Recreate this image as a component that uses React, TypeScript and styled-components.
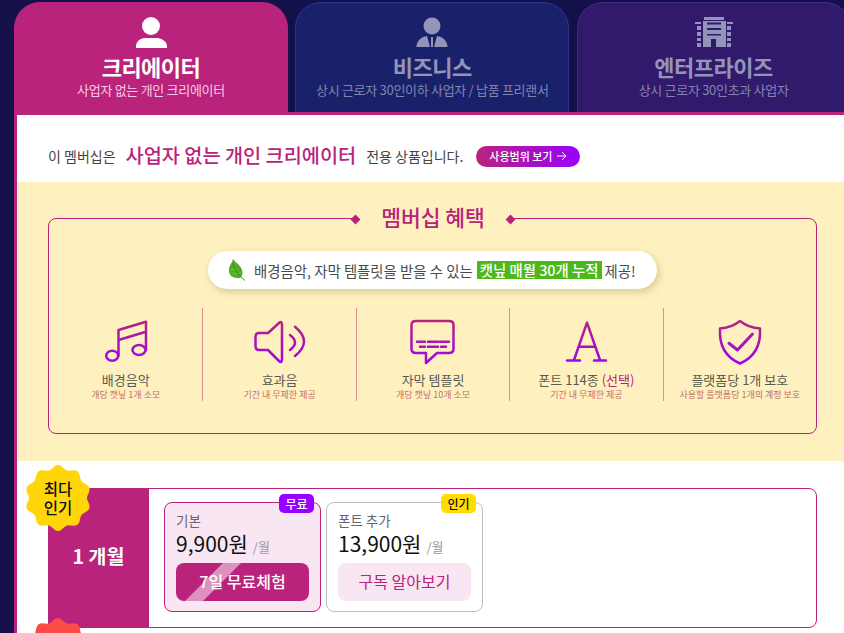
import React from 'react';
import styled, { createGlobalStyle } from 'styled-components';

const GlobalStyle = createGlobalStyle`
  html, body {
    margin: 0;
    padding: 0;
    height: 633px;
    overflow: hidden;
    background: #14104a;
    font-family: "Noto Sans CJK KR", "Noto Sans", sans-serif;
  }
  * {
    box-sizing: border-box;
  }
`;

const PINK = '#b9237c';

const Page = styled.div`
  width: 851px;
  height: 633px;
  padding: 2px 0 0 14px;
  overflow: hidden;
`;

const Tabs = styled.div`
  display: flex;
  gap: 7.3px;
  height: 110px;
`;

const Tab = styled.div<{ $bg: string; $line: string; $active?: boolean }>`
  width: 274px;
  border-radius: 26px 26px 0 0;
  background: ${(p) => p.$bg};
  border: 1px solid ${(p) => p.$line};
  border-bottom: 0;
  padding-top: 13px;
  display: flex;
  flex-direction: column;
  align-items: center;
  color: ${(p) => (p.$active ? '#fff' : '#9394b8')};
`;

const TabIcon = styled.svg`
  width: 38px;
  height: 34px;
  fill: currentColor;
  display: block;
`;

const TabTitle = styled.div`
  font-size: 22px;
  line-height: 28px;
  font-weight: 700;
  letter-spacing: -0.5px;
  margin-top: 2px;
`;

const TabSub = styled.div<{ $active?: boolean }>`
  font-size: 13px;
  line-height: 20px;
  letter-spacing: -0.3px;
  color: ${(p) => (p.$active ? '#f4cfe5' : '#8385ae')};
`;

const Panel = styled.div`
  width: 837px;
  height: 521px;
  background: #fff;
  border: 3px solid ${PINK};
  border-bottom: 0;
  position: relative;
`;

const Intro = styled.div`
  height: 67px;
  padding: 15px 0 0 31px;
  display: flex;
  align-items: center;
  color: #444;
  font-size: 14px;
`;

const IntroStrong = styled.strong`
  font-size: 19.7px;
  font-weight: 500;
  color: ${PINK};
  margin: 0 10px;
  line-height: 24px;
  position: relative;
  top: -1px;
`;

const ScopeButton = styled.a`
  margin-left: 13px;
  width: 104px;
  height: 21px;
  border-radius: 11px;
  background: linear-gradient(90deg, ${PINK}, #9900ff);
  color: #fff;
  font-size: 11px;
  font-weight: 500;
  display: flex;
  align-items: center;
  justify-content: center;
  gap: 4px;
`;

const Benefits = styled.section`
  height: 279px;
  background: #fef1bf;
  padding: 36px 31px 0;
`;

const BenefitBox = styled.div`
  position: relative;
  height: 216px;
  border: 1px solid ${PINK};
  border-radius: 8px;
  padding-top: 32px;
`;

const BenefitHeading = styled.div`
  position: absolute;
  top: -17px;
  left: 303px;
  width: 162px;
  height: 32px;
  background: #fef1bf;
  display: flex;
  align-items: center;
  justify-content: space-between;
`;

const Diamond = styled.i`
  width: 7px;
  height: 7px;
  background: ${PINK};
  transform: rotate(45deg);
  margin-top: 2px;
`;

const HeadingText = styled.h2`
  margin: 0 0 3px;
  font-size: 21.5px;
  font-weight: 500;
  color: ${PINK};
  line-height: 28px;
`;

const NoticeWrap = styled.div`
  display: flex;
  justify-content: center;
`;

const Notice = styled.div`
  width: 449px;
  height: 38px;
  border-radius: 19px;
  background: #fff;
  box-shadow: 2px 3px 7px rgba(120, 100, 40, 0.28);
  display: flex;
  align-items: center;
  padding-left: 20px;
  font-size: 14.4px;
  color: #4a4a4a;
  white-space: nowrap;
`;

const Leaf = styled.svg`
  width: 20px;
  height: 26px;
  margin-right: 6px;
  flex: none;
`;

const Highlight = styled.span`
  background: #4cb81c;
  color: #fff;
  font-weight: 500;
  padding: 0 3px;
  margin: 0 3px 0 4px;
  height: 18px;
  line-height: 18px;
`;

const Features = styled.div`
  display: grid;
  grid-template-columns: repeat(5, 1fr);
  margin-top: 19px;
  height: 92px;
`;

const Feature = styled.div`
  display: flex;
  flex-direction: column;
  align-items: center;
  border-left: 1px solid #d9938f;
  &:first-child {
    border-left: 0;
  }
`;

const FeatureIcon = styled.svg`
  width: 52px;
  height: 46px;
  margin-top: 11px;
  flex: none;
  fill: none;
  stroke: url(#iconGrad);
  stroke-width: 2.5;
  stroke-linecap: round;
  stroke-linejoin: round;
`;

const FeatureName = styled.div`
  font-size: 13px;
  line-height: 17px;
  margin-top: 6px;
  color: #5a5a50;
  white-space: nowrap;
`;

const Accent = styled.span`
  color: ${PINK};
`;

const FeatureSub = styled.div`
  font-size: 9px;
  line-height: 13px;
  color: #c46f6a;
  white-space: nowrap;
`;

const Plans = styled.section`
  padding: 27px 31px 0;
  position: relative;
`;

const PlanRow = styled.div`
  height: 140px;
  border: 1px solid ${PINK};
  border-radius: 0 8px 8px 0;
  display: flex;
`;

const PlanLabel = styled.div`
  width: 101px;
  flex: none;
  margin: -1px 0 -1px -1px;
  background: ${PINK};
  color: #fff;
  font-size: 19.5px;
  font-weight: 700;
  display: flex;
  align-items: center;
  justify-content: center;
  padding-bottom: 6px;
`;

const PlanCards = styled.div`
  display: flex;
  gap: 5px;
  padding: 13px 0 0 15px;
`;

const PlanCard = styled.div<{ $featured?: boolean }>`
  position: relative;
  width: 157px;
  height: 110px;
  border: 1px solid ${(p) => (p.$featured ? PINK : '#bdbdbd')};
  border-radius: 8px;
  background: ${(p) => (p.$featured ? '#f8e6f3' : '#fff')};
  padding: 8px 11px 0;
`;

const CardBadge = styled.span<{ $bg: string; $fg: string }>`
  position: absolute;
  top: -9px;
  right: 6px;
  width: 35px;
  height: 19px;
  border-radius: 5px;
  background: ${(p) => p.$bg};
  color: ${(p) => p.$fg};
  font-size: 12px;
  font-weight: 500;
  display: flex;
  align-items: center;
  justify-content: center;
`;

const CardName = styled.div`
  font-size: 13.5px;
  line-height: 18px;
  color: #666;
`;

const Price = styled.div`
  font-size: 21px;
  line-height: 28px;
  font-weight: 400;
  color: #111;
  display: flex;
  align-items: baseline;
  gap: 5px;
`;

const Per = styled.span`
  font-size: 13px;
  color: #999;
`;

const CardButton = styled.a<{ $primary?: boolean }>`
  position: relative;
  overflow: hidden;
  display: flex;
  align-items: center;
  justify-content: center;
  height: 38px;
  margin-top: 2px;
  padding-bottom: 2px;
  border-radius: 8px;
  font-size: 16px;
  font-weight: ${(p) => (p.$primary ? 500 : 400)};
  background: ${(p) => (p.$primary ? PINK : '#f8e6f3')};
  color: ${(p) => (p.$primary ? '#fff' : PINK)};
  ${(p) =>
    p.$primary &&
    `&::before {
      content: '';
      position: absolute;
      left: 28px;
      top: 0;
      width: 18px;
      height: 100%;
      background: rgba(255, 255, 255, 0.5);
      transform: skewX(-45deg);
    }`}
`;

const ButtonText = styled.span`
  position: relative;
`;

const Burst = styled.div<{ $left: number; $top: number; $color: string }>`
  position: absolute;
  left: ${(p) => p.$left}px;
  top: ${(p) => p.$top}px;
  width: 66px;
  height: 66px;
  color: #111;
  font-size: 15.5px;
  font-weight: 500;
  line-height: 19px;
  text-align: center;
  display: flex;
  align-items: center;
  justify-content: center;
  & svg {
    position: absolute;
    inset: 0;
    fill: ${(p) => p.$color};
  }
  & span {
    position: relative;
  }
`;

// wavy sticker outline
const burstPath = () => {
  const pts: string[] = [];
  for (let i = 0; i < 120; i++) {
    const a = (i / 120) * Math.PI * 2;
    const r = 31 + 2 * Math.cos(a * 10);
    pts.push(`${(33 + r * Math.sin(a)).toFixed(2)},${(33 - r * Math.cos(a)).toFixed(2)}`);
  }
  return `M${pts.join('L')}Z`;
};

const features = [
  { name: '배경음악', sub: '개당 캣닢 1개 소모', icon: 'music' },
  { name: '효과음', sub: '기간 내 무제한 제공', icon: 'sound' },
  { name: '자막 템플릿', sub: '개당 캣닢 10개 소모', icon: 'caption' },
  { name: '폰트 114종', extra: '(선택)', sub: '기간 내 무제한 제공', icon: 'font' },
  { name: '플랫폼당 1개 보호', sub: '사용할 플랫폼당 1개의 계정 보호', icon: 'shield' },
];

const iconPaths: Record<string, React.ReactNode> = {
  music: (
    <>
      <ellipse cx="12.2" cy="36.7" rx="6" ry="5" />
      <ellipse cx="39" cy="31" rx="6.5" ry="5" />
      <path d="M18.5 36.7V11L46 2.7V31M18.5 21L46 12.7" />
    </>
  ),
  sound: (
    <>
      <path d="M25 4C27 2 28 3 28 6V40C28 43 27 44 25 42L14 31H5C2.5 31 1.5 30 1.5 27V18C1.5 15 2.5 14 5 14H14Z" />
      <path d="M36 16Q46 23.5 36 31" />
      <path d="M41 7.7Q59 22.7 41 37" />
    </>
  ),
  caption: (
    <>
      <path d="M9 2H42C45 2 46.5 3.5 46.5 6V30C46.5 33 45 34 42 34H30L19 44V34H9C6 34 4.5 33 4.5 30V6C4.5 3.5 6 2 9 2Z" />
      <path d="M10 22.7H18M21 22.7H31M33 22.7H42M13 27.7H18M21 27.7H31M34 27.7H39" />
    </>
  ),
  font: <path d="M27 3.7L14 41M27 3.7L40 41M19 27.7H35M7 41.5H20M34 41.5H46" />,
  shield: (
    <>
      <path d="M26 2C31 6 38 9 46 9.5C47 26 41 38 26 44.5C11 38 5 26 6 9.5C14 9 21 6 26 2Z" />
      <path d="M15 24.3L23.5 31L38.5 15" strokeWidth="3" />
    </>
  ),
};

const App: React.FC = () => (
  <Page>
    <GlobalStyle />
    <svg width="0" height="0" style={{ position: 'absolute' }}>
      <defs>
        <linearGradient id="iconGrad" gradientUnits="userSpaceOnUse" x1="0" y1="0" x2="0" y2="46">
          <stop offset="0" stopColor="#b9237c" />
          <stop offset="1" stopColor="#9a05f0" />
        </linearGradient>
      </defs>
    </svg>
    <Tabs>
      <Tab $bg="#b9237c" $line="#b9237c" $active>
        <TabIcon viewBox="-1 0 38 34">
          <circle cx="18" cy="10" r="9" />
          <path d="M3 32V30C3 26 7 22 12 22H24C29 22 34 26 34 30V32Z" />
        </TabIcon>
        <TabTitle>크리에이터</TabTitle>
        <TabSub $active>사업자 없는 개인 크리에이터</TabSub>
      </Tab>
      <Tab $bg="#1a216b" $line="#2a3488">
        <TabIcon viewBox="-1 0 38 34">
          <circle cx="18" cy="10" r="8.5" />
          <path d="M2.5 31C2.5 25 7 21 13 20L16 31ZM33.5 31C33.5 25 29 21 23 20L20 31ZM17 21H19L19 31H17Z" />
        </TabIcon>
        <TabTitle>비즈니스</TabTitle>
        <TabSub>상시 근로자 30인이하 사업자 / 납품 프리랜서</TabSub>
      </Tab>
      <Tab $bg="#31196b" $line="#43288a">
        <TabIcon viewBox="-1 0 38 34">
          <path
            fillRule="evenodd"
            d="M8 1H28V4H8ZM7 5H30V31H7ZM11 6.5V8.5H25V6.5ZM11 12V14H25V12ZM11 18V19.5H25V18ZM15 23V31H20V23Z"
          />
          <path d="M-1 6H5V8H-1ZM1 10H5V14H1ZM1 16H5V20H1ZM1 22H5V25H1ZM1 27H5V31H1ZM31 6H37V8H31ZM31 10H35V14H31ZM31 16H35V20H31ZM31 22H35V25H31ZM31 27H35V31H31Z" />
        </TabIcon>
        <TabTitle>엔터프라이즈</TabTitle>
        <TabSub>상시 근로자 30인초과 사업자</TabSub>
      </Tab>
    </Tabs>
    <Panel>
      <Intro>
        이 멤버십은
        <IntroStrong>사업자 없는 개인 크리에이터</IntroStrong>
        전용 상품입니다.
        <ScopeButton>
          사용범위 보기
          <svg width="11" height="10" viewBox="0 0 11 10" fill="none" stroke="#fff" strokeWidth="1">
            <path d="M1 5H10M6 1L10 5L6 9" />
          </svg>
        </ScopeButton>
      </Intro>
      <Benefits>
        <BenefitBox>
          <BenefitHeading>
            <Diamond />
            <HeadingText>멤버십 혜택</HeadingText>
            <Diamond />
          </BenefitHeading>
          <NoticeWrap>
            <Notice>
              <Leaf viewBox="0 0 20 26">
                <path d="M5 2C8 6 14 9 14.5 15C15 19 12 22 9 21C4 21 0 17 1 12C1.5 8 4 6 5 2Z" fill="#4fae24" />
                <path d="M5 6C5.5 11 9 17 17 23.5" stroke="#3d8c1a" strokeWidth="1" fill="none" />
                <path d="M3 12L7 13M3.5 16L9 16.5M10 12L8 14M13 15L10.5 17" stroke="#78cc4c" strokeWidth="0.7" fill="none" />
              </Leaf>
              배경음악, 자막 템플릿을 받을 수 있는
              <Highlight>캣닢 매월 30개 누적</Highlight>
              제공!
            </Notice>
          </NoticeWrap>
          <Features>
            {features.map((f) => (
              <Feature key={f.name}>
                <FeatureIcon viewBox="0 0 52 46">{iconPaths[f.icon]}</FeatureIcon>
                <FeatureName>
                  {f.name} {f.extra && <Accent>{f.extra}</Accent>}
                </FeatureName>
                <FeatureSub>{f.sub}</FeatureSub>
              </Feature>
            ))}
          </Features>
        </BenefitBox>
      </Benefits>
      <Plans>
        <Burst $left={8} $top={4} $color="#ffd60a">
          <svg viewBox="0 0 66 66">
            <path d={burstPath()} />
          </svg>
          <span>
            최다
            <br />
            인기
          </span>
        </Burst>
        <PlanRow>
          <PlanLabel>1 개월</PlanLabel>
          <PlanCards>
            <PlanCard $featured>
              <CardBadge $bg="#9900ff" $fg="#fff">무료</CardBadge>
              <CardName>기본</CardName>
              <Price>
                9,900원 <Per>/월</Per>
              </Price>
              <CardButton $primary>
                <ButtonText>7일 무료체험</ButtonText>
              </CardButton>
            </PlanCard>
            <PlanCard>
              <CardBadge $bg="#ffdd00" $fg="#111">인기</CardBadge>
              <CardName>폰트 추가</CardName>
              <Price>
                13,900원 <Per>/월</Per>
              </Price>
              <CardButton>
                <ButtonText>구독 알아보기</ButtonText>
              </CardButton>
            </PlanCard>
          </PlanCards>
        </PlanRow>
        <Burst $left={8} $top={157} $color="#ff4b45">
          <svg viewBox="0 0 66 66">
            <path d={burstPath()} />
          </svg>
        </Burst>
      </Plans>
    </Panel>
  </Page>
);

export default App;
